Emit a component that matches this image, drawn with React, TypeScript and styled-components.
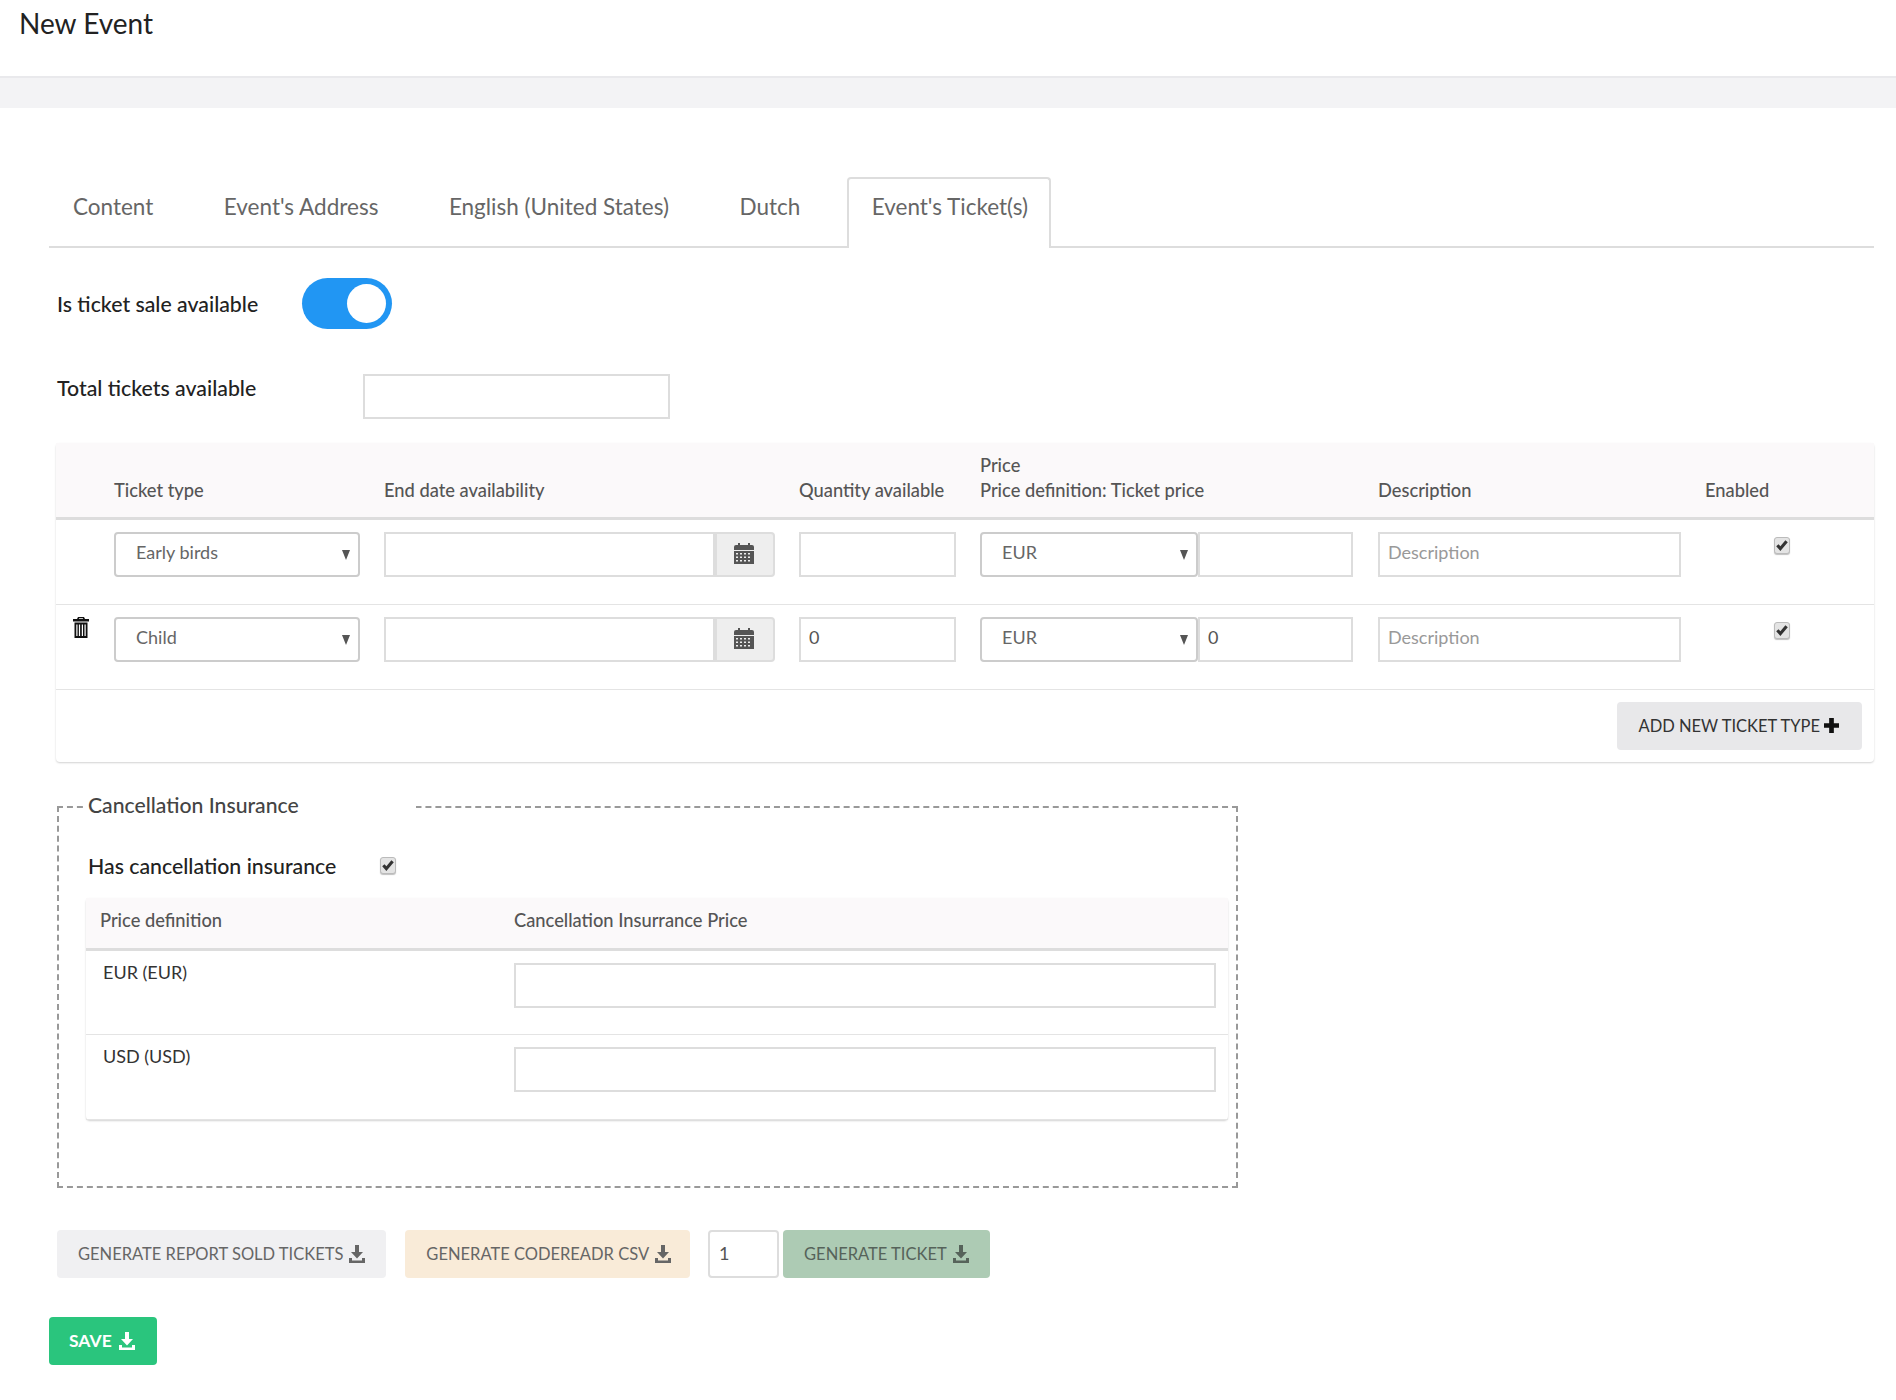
import React from 'react'
import styled, { createGlobalStyle } from 'styled-components'

const GlobalStyle = createGlobalStyle`
    html, body {
        margin: 0;
        background: #fff;
    }
    body {
        font-family: "Lato", "Open Sans", sans-serif;
        color: #222;
    }
    * {
        box-sizing: border-box;
    }
`

const Page = styled.div`
    width: 1896px;
    min-height: 1400px;
    background: #fff;
`

const TopBar = styled.header`
    height: 78px;
    padding: 7px 19px 0;
    background: #fff;
    border-bottom: 2px solid #e9e9ec;
`

const Title = styled.h1`
    margin: 0;
    font-size: 28px;
    line-height: 33px;
    font-weight: 400;
    color: #222;
`

const Band = styled.div`
    height: 30px;
    background: #f3f3f5;
`

const Content = styled.main`
    padding: 69px 22px 36px 49px;
`

const Tabs = styled.nav`
    display: flex;
    height: 71px;
    gap: 23.5px;
    border-bottom: 2px solid #ddd;
`

const Tab = styled.a<{ $active?: boolean }>`
    height: ${p => (p.$active ? '71px' : '69px')};
    padding: 13px ${p => (p.$active ? '21px' : '23px')} 0 ${p => (p.$active ? '23px' : '24px')};
    font-size: 22.5px;
    line-height: 30px;
    color: #666;
    background: #fff;
    border: 2px solid ${p => (p.$active ? '#ddd' : 'transparent')};
    border-bottom: 0;
    border-radius: 4px 4px 0 0;
    margin-left: ${p => (p.$active ? '0' : '-2px')};
    margin-right: ${p => (p.$active ? '0' : '-2px')};
`

const SwitchRow = styled.div`
    display: flex;
    align-items: center;
    margin: 30px 0 0 8px;
`

const FieldLabel = styled.label<{ $width: number }>`
    width: ${p => p.$width}px;
    font-size: 21.3px;
    line-height: 28px;
    font-weight: 500;
    color: #222;
`

const Toggle = styled.span`
    position: relative;
    display: block;
    width: 90px;
    height: 51px;
    border-radius: 26px;
    background: #2196f3;

    &::after {
        content: "";
        position: absolute;
        top: 6px;
        right: 6px;
        width: 39px;
        height: 39px;
        border-radius: 50%;
        background: #fff;
    }
`

const TotalRow = styled.div`
    display: flex;
    align-items: flex-start;
    margin: 45px 0 0 8px;
`

const TextInput = styled.input<{ $width?: string }>`
    width: ${p => p.$width || '100%'};
    height: 45px;
    padding: 0 8px 5px;
    font-family: inherit;
    font-size: 18px;
    color: #555;
    background: #fff;
    border: 2px solid #ddd;
    border-radius: 0;
    outline: none;

    &::placeholder {
        color: #999;
        opacity: 1;
    }
`

const Card = styled.div`
    background: #fff;
    border-radius: 4px;
    box-shadow: 0 1px 2px rgba(0, 0, 0, .18);
`

const TicketCard = styled(Card)`
    margin: 24px 0 0 7px;

    tbody tr:first-child td {
        height: 86px;
    }
`

const Grid = styled.table`
    width: 100%;
    border-collapse: collapse;
    table-layout: fixed;
`

const HeadCell = styled.th`
    height: 75px;
    padding: 0 12px 14px;
    vertical-align: bottom;
    text-align: left;
    font-size: 18.3px;
    line-height: 25px;
    font-weight: 500;
    color: #555;
    background: #fbf9fa;
    border-bottom: 3px solid #ddd;
`

const Cell = styled.td`
    height: 85px;
    padding: 12px;
    vertical-align: top;
    font-size: 18px;
    border-bottom: 1px solid #e4e4e4;
`

const CenterCell = styled(Cell)`
    padding: 13px 16px 0 12px;
    text-align: center;
`

const TrashCell = styled(Cell)`
    padding: 12px 0 0 17px;
    color: #111;
`

const SelectWrap = styled.span<{ $width: number }>`
    position: relative;
    display: block;
    flex: none;
    width: ${p => p.$width}px;

    &::after {
        content: "";
        position: absolute;
        top: 18px;
        right: 10px;
        border-style: solid;
        border-width: 10px 4.5px 0;
        border-color: #555 transparent transparent;
        pointer-events: none;
    }
`

const Select = styled.select`
    appearance: none;
    width: 100%;
    height: 45px;
    padding: 0 20px 5px;
    font-family: inherit;
    font-size: 18px;
    color: #666;
    background: #fff;
    border: 2px solid #ccc;
    border-radius: 4px;
    outline: none;
`

const InputGroup = styled.div`
    display: flex;
    width: 391px;
`

const AddOn = styled.span`
    flex: none;
    display: flex;
    align-items: center;
    justify-content: center;
    width: 60px;
    height: 45px;
    padding: 0 3px 2px 0;
    color: #555;
    background: #eee;
    border: 2px solid #ddd;
    border-radius: 0 4px 4px 0;
`

const PriceGroup = styled.div`
    display: flex;
    align-items: flex-start;
`

const CheckBox = styled.span`
    display: inline-flex;
    align-items: center;
    justify-content: center;
    width: 16px;
    height: 17px;
    color: #333;
    background: #e4e4e4;
    border: 1px solid #bbb;
    border-radius: 3px;
    box-shadow: 0 1px 1px rgba(0, 0, 0, .25);
`

const CardFooter = styled.div`
    display: flex;
    justify-content: flex-end;
    height: 72px;
    padding: 12px 12px 0 0;
`

const Button = styled.button<{ $bg: string; $color?: string }>`
    display: inline-flex;
    align-items: center;
    height: 48px;
    padding: 0 21px;
    font-family: inherit;
    font-size: 16.5px;
    font-weight: 400;
    color: ${p => p.$color || '#666'};
    background: ${p => p.$bg};
    border: 0;
    border-radius: 4px;
    white-space: nowrap;

    svg {
        margin-left: 6px;
    }
`

const AddButton = styled(Button)`
    padding-right: 23px;

    svg {
        margin-left: 4px;
    }
`

const ReportButton = styled(Button)`
    margin-right: 19px;
`

const CsvButton = styled(Button)`
    padding-right: 19px;
`

const Insurance = styled.fieldset`
    width: 1181px;
    height: 396px;
    margin: 30px 0 0 8px;
    padding: 0 8px 0 29px;
    border: 2px dashed #999;
`

const InsuranceLegend = styled.legend`
    width: 332px;
    padding: 0 0 5px 4px;
    margin-left: -4px;
    font-size: 21.2px;
    line-height: 26px;
    font-weight: 500;
    color: #444;
`

const CheckRow = styled.div`
    display: flex;
    align-items: center;
    height: 28px;
    margin-top: 29px;
`

const InsuranceCard = styled(Card)`
    margin: 18px 0 0 -2px;
`

const SmallHeadCell = styled(HeadCell)`
    height: 52px;
    padding: 0 12px 15px;
`

const FirstHeadCell = styled(SmallHeadCell)`
    padding-left: 14px;
`

const PriceCell = styled(Cell)`
    padding: 10px 12px 0 17px;
    color: #333;
    line-height: 22px;
`

const ButtonRow = styled.div`
    display: flex;
    align-items: center;
    margin: 42px 0 0 8px;
`

const CountInput = styled(TextInput)`
    width: 71px;
    height: 48px;
    margin: 0 4px 0 18px;
    padding: 0 9px 1px;
    border-radius: 4px;
`

const SaveButton = styled(Button)`
    display: flex;
    margin: 39px 0 0;
    padding: 0 22px 0 20px;
    font-size: 17.5px;
    font-weight: 700;

    svg {
        margin-left: 7px;
    }
`

// tray with an arrow above, the export glyph used on every action button
const DownloadIcon = () => (
    <svg width="16" height="18" viewBox="0 0 16 18" fill="currentColor">
        <path d="M6 0h4v7h4l-6 6.500L2 7h4z" />
        <path d="M0 13h3v2.500h10V13h3v5H0z" />
    </svg>
)

const PlusIcon = () => (
    <svg width="15" height="15" viewBox="0 0 16 16" fill="#111">
        <path d="M5.500 0h5v5.500H16v5h-5.500V16h-5v-5.500H0v-5h5.500z" />
    </svg>
)

const CalendarIcon = () => (
    <svg width="20" height="21" viewBox="0 0 20 21" fill="currentColor">
        <path d="M2 2h2V0h2v2h8V0h2v2h2a2 2 0 0 1 2 2v3H0V4a2 2 0 0 1 2-2z" />
        <path fillRule="evenodd" d="M0 8h20v13H0zM2 10v1.500h2V10zm4 0v1.500h2V10zm4 0v1.500h2V10zm4 0v1.500h2V10zM2 13.500v1.500h2v-1.500zm4 0v1.500h2v-1.500zm4 0v1.500h2v-1.500zm4 0v1.500h2v-1.500zM2 17v1.500h2V17zm4 0v1.500h2V17zm4 0v1.500h2V17zm4 0v1.500h2V17z" />
    </svg>
)

const TrashIcon = () => (
    <svg width="16" height="21" viewBox="0 0 16 21" fill="currentColor">
        <path fillRule="evenodd" d="M5 0h6l1 2h4v2.500H0V2h4zM6.200 1.200 5.800 2h4.400l-.4-.8z" />
        <path fillRule="evenodd" d="M1.500 5.500h13V21h-13zM3.300 7.500V19h1.200V7.500zm2.600 0V19h1.200V7.500zm2.900 0V19H10V7.500zm2.700 0V19h1.200V7.500z" />
    </svg>
)

const CheckMark = () => (
    <svg width="12" height="11" viewBox="0 0 11 10" fill="currentColor">
        <path d="M4 10 .2 5.600 2.300 3.800 4 5.800 8.600.2 10.800 2z" />
    </svg>
)

const Checked = () => (
    <CheckBox>
        <CheckMark />
    </CheckBox>
)

const tabs = ['Content', "Event's Address", 'English (United States)', 'Dutch']

const tickets = [
    { name: 'Early birds', qty: '', price: '', removable: false },
    { name: 'Child', qty: '0', price: '0', removable: true },
]

export default function App() {
    return (
        <Page>
            <GlobalStyle />
            <TopBar>
                <Title>New Event</Title>
            </TopBar>
            <Band />
            <Content>
                <Tabs>
                    {tabs.map(tab => <Tab key={tab}>{tab}</Tab>)}
                    <Tab $active>Event's Ticket(s)</Tab>
                </Tabs>

                <SwitchRow>
                    <FieldLabel $width={245}>Is ticket sale available</FieldLabel>
                    <Toggle />
                </SwitchRow>

                <TotalRow>
                    <FieldLabel $width={306}>Total tickets available</FieldLabel>
                    <TextInput $width="307px" />
                </TotalRow>

                <TicketCard>
                    <Grid>
                        <colgroup>
                            <col width="46" />
                            <col width="270" />
                            <col width="415" />
                            <col width="181" />
                            <col width="398" />
                            <col width="327" />
                            <col width="181" />
                        </colgroup>
                        <thead>
                            <tr>
                                <HeadCell />
                                <HeadCell>Ticket type</HeadCell>
                                <HeadCell>End date availability</HeadCell>
                                <HeadCell>Quantity available</HeadCell>
                                <HeadCell>Price<br />Price definition: Ticket price</HeadCell>
                                <HeadCell>Description</HeadCell>
                                <HeadCell>Enabled</HeadCell>
                            </tr>
                        </thead>
                        <tbody>
                            {tickets.map(ticket => (
                                <tr key={ticket.name}>
                                    <TrashCell>{ticket.removable && <TrashIcon />}</TrashCell>
                                    <Cell>
                                        <SelectWrap $width={246}>
                                            <Select defaultValue={ticket.name}>
                                                <option>{ticket.name}</option>
                                            </Select>
                                        </SelectWrap>
                                    </Cell>
                                    <Cell>
                                        <InputGroup>
                                            <TextInput />
                                            <AddOn><CalendarIcon /></AddOn>
                                        </InputGroup>
                                    </Cell>
                                    <Cell>
                                        <TextInput $width="157px" defaultValue={ticket.qty} />
                                    </Cell>
                                    <Cell>
                                        <PriceGroup>
                                            <SelectWrap $width={218}>
                                                <Select defaultValue="EUR">
                                                    <option>EUR</option>
                                                </Select>
                                            </SelectWrap>
                                            <TextInput $width="155px" defaultValue={ticket.price} />
                                        </PriceGroup>
                                    </Cell>
                                    <Cell>
                                        <TextInput $width="303px" placeholder="Description" />
                                    </Cell>
                                    <CenterCell><Checked /></CenterCell>
                                </tr>
                            ))}
                        </tbody>
                    </Grid>
                    <CardFooter>
                        <AddButton $bg="#e8e8ea" $color="#333">
                            ADD NEW TICKET TYPE
                            <PlusIcon />
                        </AddButton>
                    </CardFooter>
                </TicketCard>

                <Insurance>
                    <InsuranceLegend>Cancellation Insurance</InsuranceLegend>
                    <CheckRow>
                        <FieldLabel $width={292}>Has cancellation insurance</FieldLabel>
                        <Checked />
                    </CheckRow>
                    <InsuranceCard>
                        <Grid>
                            <colgroup>
                                <col width="416" />
                                <col />
                            </colgroup>
                            <thead>
                                <tr>
                                    <FirstHeadCell>Price definition</FirstHeadCell>
                                    <SmallHeadCell>Cancellation Insurrance Price</SmallHeadCell>
                                </tr>
                            </thead>
                            <tbody>
                                <tr>
                                    <PriceCell>EUR (EUR)</PriceCell>
                                    <Cell><TextInput /></Cell>
                                </tr>
                                <tr>
                                    <PriceCell>USD (USD)</PriceCell>
                                    <Cell><TextInput /></Cell>
                                </tr>
                            </tbody>
                        </Grid>
                    </InsuranceCard>
                </Insurance>

                <ButtonRow>
                    <ReportButton $bg="#f0f0f2">
                        GENERATE REPORT SOLD TICKETS
                        <DownloadIcon />
                    </ReportButton>
                    <CsvButton $bg="#f9ebd8">
                        GENERATE CODEREADR CSV
                        <DownloadIcon />
                    </CsvButton>
                    <CountInput defaultValue="1" />
                    <Button $bg="#adcbb4" $color="#56635a">
                        GENERATE TICKET
                        <DownloadIcon />
                    </Button>
                </ButtonRow>

                <SaveButton $bg="#2ac57d" $color="#fff">
                    SAVE
                    <DownloadIcon />
                </SaveButton>
            </Content>
        </Page>
    )
}
